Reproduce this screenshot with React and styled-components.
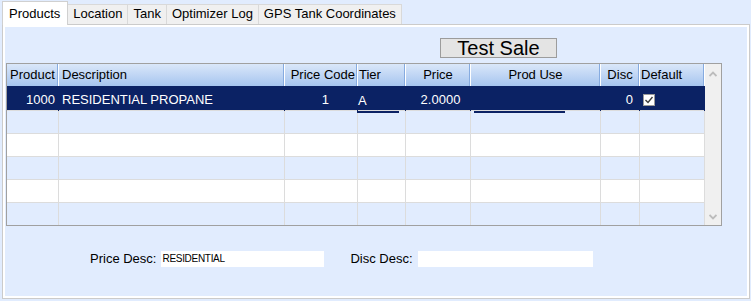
import styled, { createGlobalStyle } from "styled-components";

const GlobalStyle = createGlobalStyle`
  html, body {
    margin: 0;
    padding: 0;
  }
  body {
    width: 751px;
    height: 301px;
    overflow: hidden;
    background: #e1ecfe;
    font-family: "Liberation Sans", Arial, sans-serif;
    font-size: 13px;
    color: #000;
  }
`;

const tabs = ["Products", "Location", "Tank", "Optimizer Log", "GPS Tank Coordinates"];

// width includes the 1px grid line on the right
const columns = [
  { key: "product", title: "Product", width: 52, head: "center", align: "right", pad: "0 3px 0 0" },
  { key: "description", title: "Description", width: 226, head: "left", headPad: "0 0 0 3px", align: "left", pad: "0 0 0 3px" },
  { key: "priceCode", title: "Price Code", width: 73, head: "right", headPad: "0 2px 0 0", align: "right", pad: "0 28px 0 0" },
  { key: "tier", title: "Tier", width: 48, head: "left", headPad: "0 0 0 1px", align: "left", pad: "0", drop: 1, bleed: { left: -1, width: 42 } },
  { key: "price", title: "Price", width: 65, head: "center", align: "center", pad: "0 0 0 5px" },
  { key: "prodUse", title: "Prod Use", width: 130, head: "center", align: "center", pad: "0", bleed: { left: 3, width: 91 } },
  { key: "disc", title: "Disc", width: 39, head: "center", align: "right", pad: "0 6px 0 0" },
  { key: "isDefault", title: "Default", width: 65, head: "left", headPad: "0 0 0 1px", align: "left", pad: "0 0 0 3px" },
];

const template = columns.map((c) => `${c.width}px`).join(" ");

const rows = [
  { product: "1000", description: "RESIDENTIAL PROPANE", priceCode: "1", tier: "A", price: "2.0000", prodUse: "", disc: "0", isDefault: true },
  {}, {}, {}, {}, {},
];

const Check = () => (
  <CheckBox>
    <svg width="10" height="10" viewBox="0 0 10 10">
      <path d="M1.5 5 L4 7.5 L8.5 2" fill="none" stroke="#3c3c3c" strokeWidth="1.4" />
    </svg>
  </CheckBox>
);

const Chevron = ({ down }) => (
  <svg width="8" height="6" viewBox="0 0 8 6">
    <path
      d={down ? "M0.5 1 L4 4.5 L7.5 1" : "M0.5 5 L4 1.5 L7.5 5"}
      fill="none"
      stroke="#bcbcbc"
      strokeWidth="1.8"
    />
  </svg>
);

const App = () => {
  return (
    <>
      <GlobalStyle />
      <TabBar>
        {tabs.map((t, i) => (
          <Tab key={t} $active={i === 0}>
            {t}
          </Tab>
        ))}
      </TabBar>
      <Panel>
        <SaleButton>Test Sale</SaleButton>
        <Grid>
          <Table>
            <HeaderRow>
              {columns.map((c) => (
                <HeadCell key={c.key} $align={c.head} $pad={c.headPad}>
                  {c.title}
                </HeadCell>
              ))}
            </HeaderRow>
            {rows.map((r, i) => {
              const selected = i === 0;
              return (
                <Row key={i} $selected={selected} $odd={i % 2 === 1}>
                  {columns.map((c) => (
                    <Cell
                      key={c.key}
                      $selected={selected}
                      $align={c.align}
                      $pad={c.pad}
                      $drop={c.drop || 0}
                      $bleed={selected ? c.bleed : null}
                    >
                      {c.key === "isDefault" ? r.isDefault && <Check /> : r[c.key]}
                    </Cell>
                  ))}
                </Row>
              );
            })}
          </Table>
          <ScrollBar>
            <Chevron />
            <Chevron down />
          </ScrollBar>
        </Grid>
        <Fields>
          <Label>Price Desc:</Label>
          <Field $width={163}>RESIDENTIAL</Field>
          <Label $gap={26}>Disc Desc:</Label>
          <Field $width={175} />
        </Fields>
      </Panel>
    </>
  );
};

export default App;

const TabBar = styled.div`
  display: flex;
  align-items: flex-end;
  height: 24px;
  padding-left: 2px;
`;

const Tab = styled.div`
  box-sizing: border-box;
  position: relative;
  height: ${(p) => (p.$active ? 24 : 20)}px;
  margin-bottom: ${(p) => (p.$active ? -1 : 0)}px;
  margin-right: -1px;
  padding: ${(p) => (p.$active ? "4px 7px 0 6px" : "1px 5px 0 5px")};
  border: 1px solid ${(p) => (p.$active ? "#d0d0d0" : "#d9d9d9")};
  border-bottom: none;
  background: ${(p) => (p.$active ? "#fff" : "#f0f0f0")};
  line-height: 15px;
  white-space: nowrap;
  z-index: ${(p) => (p.$active ? 2 : 1)};
`;

const Panel = styled.section`
  box-sizing: border-box;
  height: 275px;
  margin: 0 1px 0 2px;
  padding: 2px;
  border: 1px solid #cbcbcb;
  box-shadow: inset 0 0 0 2px #fff;
  background: #e1ecfe;
  display: flex;
  flex-direction: column;
  align-items: flex-start;
`;

const SaleButton = styled.div`
  box-sizing: border-box;
  width: 117px;
  height: 20px;
  margin: 11px 0 0 435px;
  border: 1px solid #9c9c9c;
  background: #e4e4e4;
  font-size: 20px;
  line-height: 19px;
  text-align: center;
`;

const Grid = styled.div`
  box-sizing: border-box;
  display: flex;
  width: 716px;
  height: 163px;
  margin: 5px 0 0 1px;
  border: 1px solid #a0a0a0;
  background: #fff;
`;

const Table = styled.div`
  display: flex;
  flex-direction: column;
  width: 698px;
`;

const HeaderRow = styled.div`
  display: grid;
  grid-template-columns: ${template};
  height: 22px;
  background: linear-gradient(#dae7fa, #a6c5ef);
`;

const HeadCell = styled.div`
  box-sizing: border-box;
  padding: ${(p) => p.$pad || "0"};
  border-right: 1px solid #fff;
  box-shadow: inset -1px 0 0 #86abe0;
  line-height: 22px;
  text-align: ${(p) => p.$align};
  white-space: nowrap;
  overflow: hidden;
`;

const Row = styled.div`
  box-sizing: border-box;
  display: grid;
  grid-template-columns: ${template};
  height: ${(p) => (p.$selected ? 24 : 23)}px;
  border-top: ${(p) => (p.$selected ? "none" : "1px solid #dcdcdc")};
  background: ${(p) => (p.$selected ? "#0b2264" : p.$odd ? "#e1ecfe" : "#fff")};
  color: ${(p) => (p.$selected ? "#fff" : "#000")};
`;

const Cell = styled.div`
  box-sizing: border-box;
  position: relative;
  padding: ${(p) => p.$pad};
  padding-top: ${(p) => (p.$selected ? 4 + p.$drop : 0)}px;
  border-right: 1px solid ${(p) => (p.$selected ? "#0b2264" : "#dcdcdc")};
  line-height: 20px;
  text-align: ${(p) => p.$align};
  white-space: nowrap;
  ${(p) =>
    p.$bleed &&
    `
    &::after {
      content: "";
      position: absolute;
      left: ${p.$bleed.left}px;
      width: ${p.$bleed.width}px;
      bottom: -2px;
      height: 2px;
      background: #0b2264;
      z-index: 1;
    }
  `}
`;

const CheckBox = styled.span`
  box-sizing: border-box;
  display: inline-flex;
  align-items: center;
  justify-content: center;
  width: 12px;
  height: 12px;
  margin-top: 4px;
  vertical-align: top;
  background: #fff;
  border: 1px solid #9a9a9a;
`;

const ScrollBar = styled.div`
  box-sizing: border-box;
  width: 16px;
  padding: 7px 0 5px;
  background: #f0f0f0;
  display: flex;
  flex-direction: column;
  justify-content: space-between;
  align-items: center;
`;

const Fields = styled.div`
  display: flex;
  align-items: center;
  margin-top: 25px;
  padding-left: 85px;
`;

const Label = styled.span`
  margin-left: ${(p) => p.$gap || 0}px;
  margin-right: 5px;
  line-height: 16px;
`;

const Field = styled.div`
  box-sizing: border-box;
  width: ${(p) => p.$width}px;
  height: 16px;
  padding-left: 1px;
  background: #fff;
  font-size: 10px;
  letter-spacing: -0.3px;
  line-height: 16px;
`;
